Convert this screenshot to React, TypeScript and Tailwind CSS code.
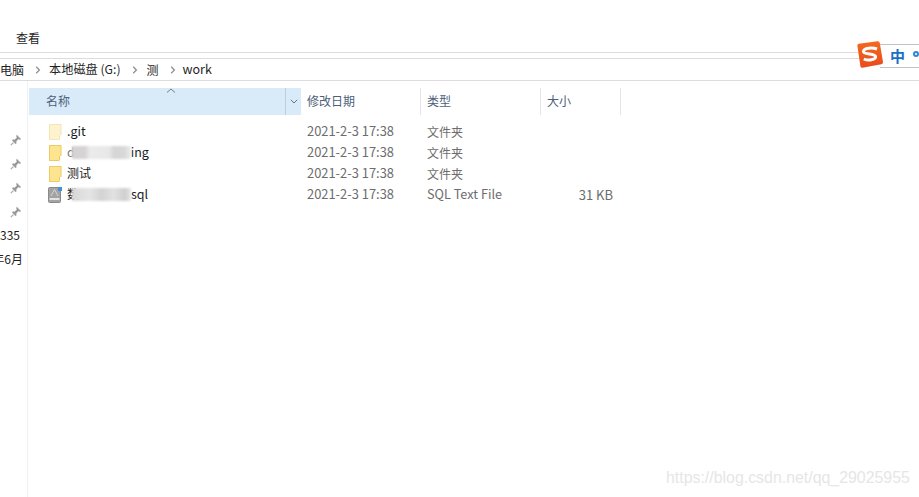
import React from "react";

const font = { fontFamily: '"Noto Sans CJK SC", "Noto Sans", sans-serif' };

function Pin() {
  return (
    <svg width="12" height="12" viewBox="0 0 12 12" className="block">
      <path d="M6.8 0.8 L11.2 5.2 L9.8 5.8 L8.4 5.2 L6.4 7.2 L6.4 9.4 L5.4 10 L2 6.6 L2.6 5.6 L4.8 5.6 L6.8 3.6 L6.2 2.2 Z" fill="#9a9a9a" />
      <path d="M3.4 8.6 L0.8 11.2" stroke="#a8a8a8" strokeWidth="1.2" />
    </svg>
  );
}

function Folder({ pale }: { pale?: boolean }) {
  const fill = pale ? "#fdf3cf" : "#fde48f";
  const stroke = pale ? "#f3e6b4" : "#eccb66";
  return (
    <svg width="13" height="16" viewBox="0 0 13 16" className="block">
      <rect x="0.5" y="0.5" width="11.5" height="15" fill={fill} stroke={stroke} />
      <rect x="10" y="11" width="3" height="5" fill="#ffffff" />
      <path d="M10.5 11 V15.5" stroke={stroke} />
    </svg>
  );
}

function SqlIcon() {
  return (
    <svg width="14" height="16" viewBox="0 0 14 16" className="block -ml-[1px]">
      <rect x="0.5" y="0.5" width="12" height="15" rx="1" fill="#a3a3a3" stroke="#8a8a8a" />
      <path d="M3 9 L6.5 2.5 L10 9" stroke="#d4d4d4" strokeWidth="1" fill="none" />
      <rect x="1.5" y="11" width="10" height="2" fill="#e3e3e3" />
      <rect x="10" y="0" width="4" height="4" fill="#3f8fe0" />
    </svg>
  );
}

function Sep() {
  return (
    <svg width="6" height="8" viewBox="0 0 6 8" className="block shrink-0">
      <path d="M1.2 0.8 L4.4 4 L1.2 7.2" stroke="#8f8f8f" strokeWidth="1.3" fill="none" />
    </svg>
  );
}

function HeaderCell({ label, w, pl }: { label: string; w: string; pl: string }) {
  return (
    <div className={`${w} ${pl} h-[27px] pb-[2px] flex items-center border-r border-[#e5e5e5] text-[12px] text-[#4c607a] shrink-0`}>
      {label}
    </div>
  );
}

function Row({
  icon,
  name,
  type,
  size,
}: {
  icon: React.ReactNode;
  name: React.ReactNode;
  type: string;
  size?: string;
}) {
  return (
    <div className="h-[21px] flex items-center leading-none">
      <div className="w-[273px] shrink-0 flex items-center pl-[20px] gap-[5px] text-[12.5px] text-[#1a1a1a]">
        <span className="w-[13px] shrink-0">{icon}</span>
        <span className="flex items-center whitespace-nowrap pb-[1px]">{name}</span>
      </div>
      <div className="w-[119px] shrink-0 pl-[5px] text-[12.9px] text-[#6d6d6d]">2021-2-3 17:38</div>
      <div className={`w-[120px] shrink-0 pl-[6px] text-[#6d6d6d] ${size ? "text-[12.7px]" : "text-[12px]"}`}>{type}</div>
      {size ? <div className="w-[72px] shrink-0 text-right text-[13px] text-[#6d6d6d]">{size}</div> : null}
    </div>
  );
}

export default function App() {
  return (
    <div className="relative w-[919px] h-[497px] overflow-hidden bg-white flex flex-col" style={font}>
      <div className="h-[53px] shrink-0 border-b border-[#dcdcdc] flex items-end pl-[16px] pb-[7px] text-[12px] text-[#1f1f1f]">
        <span className="leading-[14px]">查看</span>
      </div>
      <div className="h-[23px] mt-[5px] shrink-0 border-y border-[#dcdcdc] flex items-center text-[12px] text-[#1f1f1f]">
        <span>电脑</span>
        <span className="ml-[11px]"><Sep /></span>
        <span className="ml-[8px] text-[12.2px]">本地磁盘 (G:)</span>
        <span className="ml-[11px]"><Sep /></span>
        <span className="ml-[9px]">测</span>
        <span className="ml-[11px]"><Sep /></span>
        <span className="ml-[7px] text-[12.5px]">work</span>
      </div>
      <div className="flex flex-1 min-h-0">
        <div className="w-[28px] shrink-0 border-r border-[#f0f0f0] pt-[47px] flex flex-col text-[12px] text-[#1f1f1f]">
          {[0, 1, 2, 3].map((i) => (
            <div key={i} className="h-[24px] flex items-center justify-end pr-[5px]">
              <Pin />
            </div>
          ))}
          <div className="h-[24px] pb-[2px] flex items-center">335</div>
          <div className="h-[24px] pb-[2px] flex items-center justify-end pr-[4px] whitespace-nowrap">年6月</div>
        </div>
        <div className="flex-1 min-w-0 pt-[7px] ml-[1px]">
          <div className="flex items-stretch h-[27px]">
            <div className="relative w-[272px] h-[27px] pb-[2px] shrink-0 bg-[#d9ebf9] flex items-center">
              <span className="pl-[17px] text-[12px] text-[#4c607a]">名称</span>
              <svg width="10" height="6" viewBox="0 0 10 6" className="absolute left-[137px] top-[0px]">
                <path d="M1 4.5 L5 1 L9 4.5" stroke="#7d7d7d" strokeWidth="1" fill="none" />
              </svg>
              <div className="absolute right-0 top-0 w-[16px] h-[27px] border-l border-[#b9cfe2] flex items-center justify-center">
                <svg width="8" height="5" viewBox="0 0 8 5">
                  <path d="M0.8 0.8 L4 4 L7.2 0.8" stroke="#64748b" strokeWidth="1" fill="none" />
                </svg>
              </div>
            </div>
            <div className="w-px shrink-0" />
            <HeaderCell label="修改日期" w="w-[119px]" pl="pl-[5px]" />
            <HeaderCell label="类型" w="w-[120px]" pl="pl-[6px]" />
            <HeaderCell label="大小" w="w-[80px]" pl="pl-[6px]" />
          </div>
          <div className="pt-[6px]">
            <Row icon={<Folder pale />} name=".git" type="文件夹" />
            <Row
              icon={<Folder />}
              name={
                <>
                  <span className="text-[#777777]">d</span>
                  <span className="inline-block w-[59px] h-[13px] -ml-[3px] blur-[1px] bg-[linear-gradient(90deg,#d6d3d4_0%,#d6d3d4_22%,#ebebeb_30%,#e8e8e8_62%,#d6d5d5_72%,#d8d8d8_88%,#ececec_100%)]" />
                  <span>ing</span>
                </>
              }
              type="文件夹"
            />
            <Row icon={<Folder />} name={<span className="text-[12px]">测试</span>} type="文件夹" />
            <Row
              icon={<SqlIcon />}
              name={
                <>
                  <span className="text-[12px]">数</span>
                  <span className="inline-block w-[59px] h-[13px] -ml-[7px] blur-[1px] bg-[linear-gradient(90deg,#d8d6d7_0%,#e6e5e5_30%,#d4d3d3_50%,#e2e2e2_70%,#cfcfcf_90%,#e8e8e8_100%)]" />
                  <span>sql</span>
                </>
              }
              type="SQL Text File"
              size="31 KB"
            />
          </div>
        </div>
      </div>

      <div className="absolute left-[880px] top-[44px] w-[39px] h-[24px] bg-white border-y border-[#c3c3c3]">
        <span className="absolute left-[10px] top-[1px] text-[15px] leading-[20px] font-bold text-[#1a6fc4]">中</span>
        <span className="absolute left-[33px] top-[6px] w-[6px] h-[6px] rounded-full border-2 border-[#2f86d6]" />
      </div>
      <svg width="28" height="28" viewBox="0 0 28 28" className="absolute left-[856px] top-[41px]">
        <defs>
          <linearGradient id="sg" x1="0" y1="0" x2="0" y2="1">
            <stop offset="0" stopColor="#f26a1f" />
            <stop offset="1" stopColor="#ea4a1c" />
          </linearGradient>
        </defs>
        <path d="M1.4 5 Q1 3.2 2.8 2.8 L21.5 0.3 Q23.4 0.1 23.8 2 L27 21 Q27.2 22.8 25.4 23.2 L6.4 26.8 Q4.8 27 4.4 25.2 Z" fill="url(#sg)" />
        <path d="M21 8 C16 6 8 7 7.4 10.4 C7.2 14 19 12.2 19.6 15.6 C19.8 19 12 20 7.8 18" stroke="#ffffff" strokeWidth="3" fill="none" />
      </svg>
      <div className="absolute left-[666px] top-[469px] text-[15.9px] leading-[18px] text-[#e6e6e6] whitespace-nowrap" style={{ fontFamily: '"Liberation Sans", sans-serif' }}>
        https://blog.csdn.net/qq_29025955
      </div>
    </div>
  );
}
